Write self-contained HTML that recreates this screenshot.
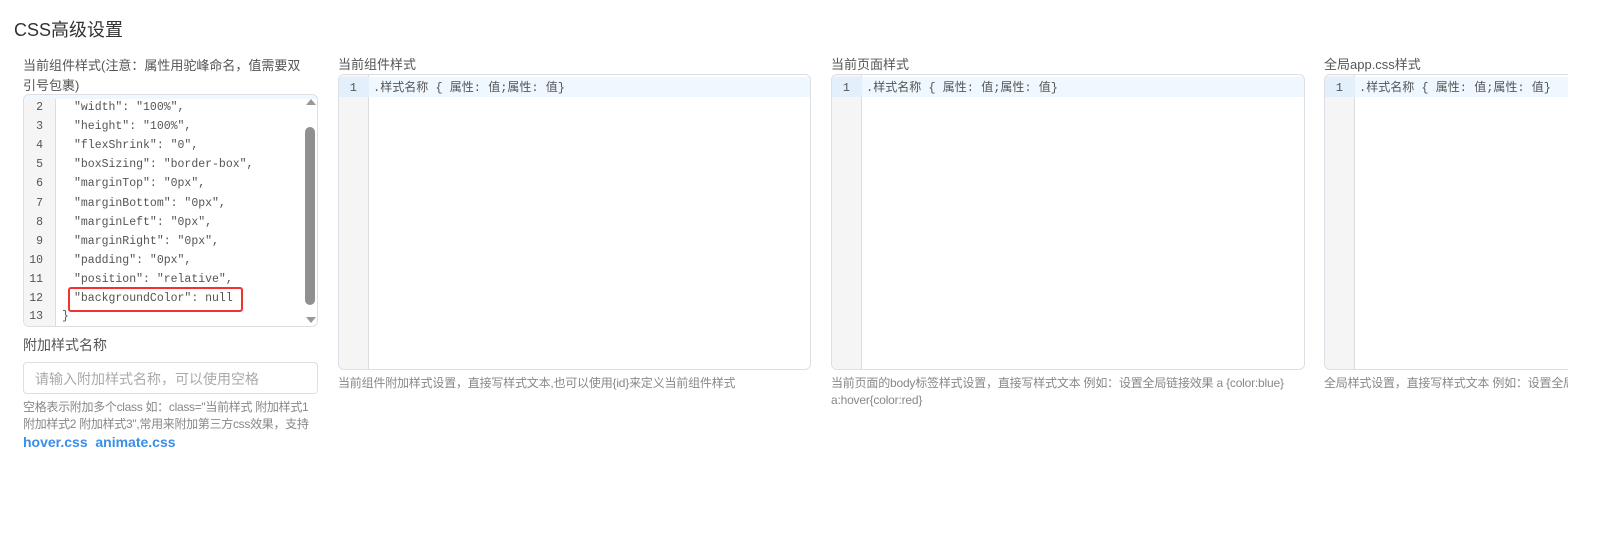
<!DOCTYPE html>
<html><head><meta charset="utf-8"><style>
*{box-sizing:border-box;margin:0;padding:0}
body{width:1616px;height:546px;background:#fff;font-family:"Liberation Sans","Noto Sans CJK SC",sans-serif;color:#555;position:relative;overflow:hidden}
.abs{position:absolute}
.title{left:14px;top:16px;font-size:18px;color:#333}
.lbl{font-size:13px;color:#555;line-height:20px}
.ed{border:1px solid #dcdfe6;border-radius:6px;overflow:hidden;background:#fff}
.gut{position:absolute;left:0;top:0;bottom:0;background:#f5f5f5;border-right:1px solid #ddd}
.code{font-family:"Liberation Mono","Noto Sans CJK SC",monospace;font-size:12px;color:#555;white-space:nowrap}
.hl{position:absolute;left:0;right:0;top:2px;height:20px;background:#eff8fe}
.hlg{position:absolute;left:0;top:2px;height:20px;background:#e3f0fb}
.help{font-size:12px;color:#888;line-height:17px}
.ln{position:absolute;text-align:right;font-family:"Liberation Mono",monospace;font-size:12px;color:#555}
.r{display:flex;height:19.1px;align-items:center}
.r span:first-child{width:20px;text-align:right}
.r span+span{margin-left:31px;white-space:pre}
</style></head><body>
<div class="abs title">CSS高级设置</div>

<div class="abs lbl" style="left:23px;top:56px;width:284px">当前组件样式(注意：属性用驼峰命名，值需要双引号包裹)</div>
<div class="abs ed" style="left:23px;top:94px;width:295px;height:233px">
 <div class="gut" style="width:32px"></div>
 <div style="position:absolute;left:0;right:0;top:0;height:4px;background:#eff8fe"></div>
 <div style="position:absolute;left:282px;top:4px;width:0;height:0;border-left:5px solid transparent;border-right:5px solid transparent;border-bottom:6px solid #999"></div>
 <div style="position:absolute;left:281px;top:32px;width:10px;height:178px;background:#909090;border-radius:5px"></div>
 <div style="position:absolute;left:282px;top:222px;width:0;height:0;border-left:5px solid transparent;border-right:5px solid transparent;border-top:6px solid #999"></div>
</div>
<div class="abs code" style="left:23px;top:98px;font-size:11.5px"><div class="r"><span>2</span><span>"width": "100%",</span></div><div class="r"><span>3</span><span>"height": "100%",</span></div><div class="r"><span>4</span><span>"flexShrink": "0",</span></div><div class="r"><span>5</span><span>"boxSizing": "border-box",</span></div><div class="r"><span>6</span><span>"marginTop": "0px",</span></div><div class="r"><span>7</span><span>"marginBottom": "0px",</span></div><div class="r"><span>8</span><span>"marginLeft": "0px",</span></div><div class="r"><span>9</span><span>"marginRight": "0px",</span></div><div class="r"><span>10</span><span>"padding": "0px",</span></div><div class="r"><span>11</span><span>"position": "relative",</span></div><div class="r"><span>12</span><span>"backgroundColor": null</span></div><div class="r" style="height:16px;overflow:hidden"><span>13</span><span style="margin-left:19px">}</span></div></div>
<div class="abs" style="left:68px;top:287px;width:175px;height:25px;border:2px solid #f03232;border-radius:3px"></div>

<div class="abs lbl" style="left:23px;top:335px;font-size:14px">附加样式名称</div>
<div class="abs" style="left:23px;top:362px;width:295px;height:32px;border:1px solid #dcdfe6;border-radius:4px;font-size:14px;color:#aaa;padding:6px 11px">请输入附加样式名称，可以使用空格</div>
<div class="abs help" style="left:23px;top:399px;width:300px;letter-spacing:-0.3px">空格表示附加多个class 如：class="当前样式 附加样式1 附加样式2 附加样式3",常用来附加第三方css效果，支持</div>
<div class="abs" style="left:23px;top:434px;font-size:14px;font-weight:bold;color:#3a8ee6">hover.css&nbsp; animate.css</div>

<div class="abs lbl" style="left:338px;top:55px">当前组件样式</div>
<div class="abs ed" style="left:338px;top:74px;width:473px;height:296px">
 <div class="gut" style="width:30px"></div><div class="hl"></div><div class="hlg" style="width:30px"></div>
 <div class="ln" style="left:0;top:4px;width:18px;line-height:18px">1</div>
 <div class="abs code" style="left:34px;top:4px;line-height:18px">.样式名称 { 属性: 值;属性: 值}</div>
</div>
<div class="abs help" style="left:338px;top:375px;letter-spacing:-0.2px">当前组件附加样式设置，直接写样式文本,也可以使用{id}来定义当前组件样式</div>

<div class="abs lbl" style="left:831px;top:55px">当前页面样式</div>
<div class="abs ed" style="left:831px;top:74px;width:474px;height:296px">
 <div class="gut" style="width:30px"></div><div class="hl"></div><div class="hlg" style="width:30px"></div>
 <div class="ln" style="left:0;top:4px;width:18px;line-height:18px">1</div>
 <div class="abs code" style="left:34px;top:4px;line-height:18px">.样式名称 { 属性: 值;属性: 值}</div>
</div>
<div class="abs help" style="left:831px;top:375px;width:480px;letter-spacing:-0.2px">当前页面的body标签样式设置，直接写样式文本 例如：设置全局链接效果 a {color:blue} a:hover{color:red}</div>

<div class="abs lbl" style="left:1324px;top:55px">全局app.css样式</div>
<div style="position:absolute;left:1324px;top:0;width:244px;height:546px;overflow:hidden">
<div class="abs ed" style="left:0;top:74px;width:474px;height:296px">
 <div class="gut" style="width:30px"></div><div class="hl"></div><div class="hlg" style="width:30px"></div>
 <div class="ln" style="left:0;top:4px;width:18px;line-height:18px">1</div>
 <div class="abs code" style="left:34px;top:4px;line-height:18px">.样式名称 { 属性: 值;属性: 值}</div>
</div>
<div class="abs help" style="left:0;top:375px;width:480px;letter-spacing:-0.2px">全局样式设置，直接写样式文本 例如：设置全局链接效果</div>
</div>
</body></html>
